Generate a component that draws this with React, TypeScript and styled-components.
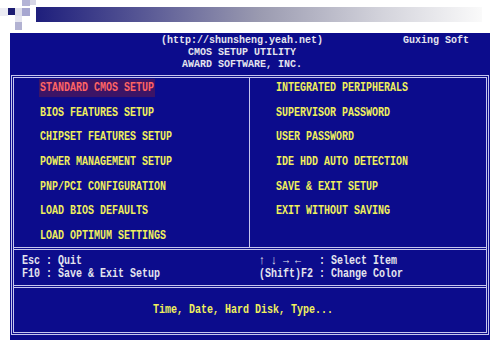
import styled, { createGlobalStyle } from "styled-components";

const GlobalStyle = createGlobalStyle`
  html, body {
    margin: 0;
    padding: 0;
    background: #ffffff;
  }
  body {
    width: 500px;
    height: 345px;
    overflow: hidden;
  }
`;

const Slide = styled.div`
  width: 500px;
  height: 345px;
  display: flex;
  flex-direction: column;
  background: #ffffff;
`;

const Decoration = styled.div`
  height: 33px;
  display: flex;
  align-items: flex-start;
`;

const GradientBar = styled.div`
  flex: 1;
  height: 15px;
  margin-top: 7px;
  margin-right: 18px;
  background: linear-gradient(90deg, #1e1e7c 0%, #5a5a96 25%, #9a9ab0 50%, #d4d4dc 78%, #fafafa 100%);
`;

const Panel = styled.div`
  margin: 0 10px;
  height: 307px;
  background: #0c0c8c;
  padding: 1px 1px 5px;
  display: flex;
  flex-direction: column;
  box-sizing: border-box;
  font-family: "Liberation Mono", "DejaVu Sans Mono", monospace;
  font-weight: 700;
  font-size: 10px;
`;

const Text = styled.span<{ $color?: string; $scale?: number }>`
  display: inline-block;
  white-space: pre;
  color: ${(p) => p.$color ?? "#e4e4ee"};
  transform: scaleY(${(p) => p.$scale ?? 1.3});
`;

const TitleBlock = styled.div`
  height: 41px;
  padding: 1px 16px 0 0;
  box-sizing: border-box;
  display: flex;
  flex-direction: column;
  line-height: 12px;
`;

const TitleRow = styled.div`
  height: 12px;
  display: grid;
  grid-template-columns: 1fr auto 1fr;
  text-align: center;
`;

const RightNote = styled.div`
  justify-self: end;
  margin-right: 4px;
`;

const Frame = styled.div`
  flex: 1;
  border: 3px double #c6c6ee;
  display: flex;
  flex-direction: column;
`;

const MenuArea = styled.div`
  height: 169px;
  display: grid;
  grid-template-columns: 1fr 1fr;
  border-bottom: 3px double #c6c6ee;
`;

const MenuColumn = styled.div<{ $divider?: boolean }>`
  display: flex;
  flex-direction: column;
  gap: 10.67px;
  padding: 3px 0 0 26px;
  line-height: 14px;
  border-right: ${(p) => (p.$divider ? "1px solid #c6c6ee" : "none")};
`;

const MenuItem = styled.div<{ $active?: boolean }>`
  height: 14px;
  & > span {
    color: ${(p) => (p.$active ? "#ff6464" : "#f0f05c")};
    background: ${(p) => (p.$active ? "#3c1466" : "transparent")};
    padding: 0 1px;
    margin-left: -1px;
  }
`;

const KeysArea = styled.div`
  height: 35px;
  display: grid;
  grid-template-columns: 1fr 1fr;
  border-bottom: 3px double #c6c6ee;
  line-height: 13px;
`;

const KeysColumn = styled.div<{ $pad: number }>`
  display: flex;
  flex-direction: column;
  padding: 4px 0 0 ${(p) => p.$pad}px;
`;

const Description = styled.div`
  flex: 1;
  display: flex;
  align-items: center;
  justify-content: center;
  padding-right: 14px;
  line-height: 14px;
`;

const Squares = () => (
  <svg width="36" height="33" viewBox="0 0 36 33" style={{ flexShrink: 0 }}>
    <rect x="22" y="0" width="8" height="6" fill="#b4b4d6" />
    <rect x="30" y="0" width="6" height="5" fill="#d6d6e6" />
    <rect x="0" y="8" width="8" height="8" fill="#ececf4" />
    <rect x="8" y="8" width="7" height="7" fill="#1c1c72" />
    <rect x="15" y="8" width="7" height="8" fill="#dedeea" />
    <rect x="22" y="8" width="8" height="8" fill="#a6a6d0" />
    <rect x="15" y="16" width="7" height="6" fill="#e6e6f0" />
    <rect x="15" y="22" width="7" height="8" fill="#b2b2d2" />
  </svg>
);

const leftMenu = [
  "STANDARD CMOS SETUP",
  "BIOS FEATURES SETUP",
  "CHIPSET FEATURES SETUP",
  "POWER MANAGEMENT SETUP",
  "PNP/PCI CONFIGURATION",
  "LOAD BIOS DEFAULTS",
  "LOAD OPTIMUM SETTINGS",
];

const rightMenu = [
  "INTEGRATED PERIPHERALS",
  "SUPERVISOR PASSWORD",
  "USER PASSWORD",
  "IDE HDD AUTO DETECTION",
  "SAVE & EXIT SETUP",
  "EXIT WITHOUT SAVING",
];

export default function App() {
  return (
    <>
      <GlobalStyle />
      <Slide>
        <Decoration>
          <Squares />
          <GradientBar />
        </Decoration>
        <Panel>
          <TitleBlock>
            <TitleRow>
              <div />
              <Text $scale={1.15}>(http://shunsheng.yeah.net)</Text>
              <RightNote>
                <Text $scale={1.15}>Guxing Soft</Text>
              </RightNote>
            </TitleRow>
            <TitleRow>
              <div />
              <Text $scale={1.15}>CMOS SETUP UTILITY</Text>
              <div />
            </TitleRow>
            <TitleRow>
              <div />
              <Text $scale={1.15}>AWARD SOFTWARE, INC.</Text>
              <div />
            </TitleRow>
          </TitleBlock>
          <Frame>
            <MenuArea>
              <MenuColumn $divider>
                {leftMenu.map((item, i) => (
                  <MenuItem key={item} $active={i === 0}>
                    <Text>{item}</Text>
                  </MenuItem>
                ))}
              </MenuColumn>
              <MenuColumn>
                {rightMenu.map((item) => (
                  <MenuItem key={item}>
                    <Text>{item}</Text>
                  </MenuItem>
                ))}
              </MenuColumn>
            </MenuArea>
            <KeysArea>
              <KeysColumn $pad={8}>
                <Text>Esc : Quit</Text>
                <Text>F10 : Save &amp; Exit Setup</Text>
              </KeysColumn>
              <KeysColumn $pad={9}>
                <Text>{"↑ ↓ → ←   : Select Item"}</Text>
                <Text>(Shift)F2 : Change Color</Text>
              </KeysColumn>
            </KeysArea>
            <Description>
              <Text $color="#f0f05c">Time, Date, Hard Disk, Type...</Text>
            </Description>
          </Frame>
        </Panel>
      </Slide>
    </>
  );
}
